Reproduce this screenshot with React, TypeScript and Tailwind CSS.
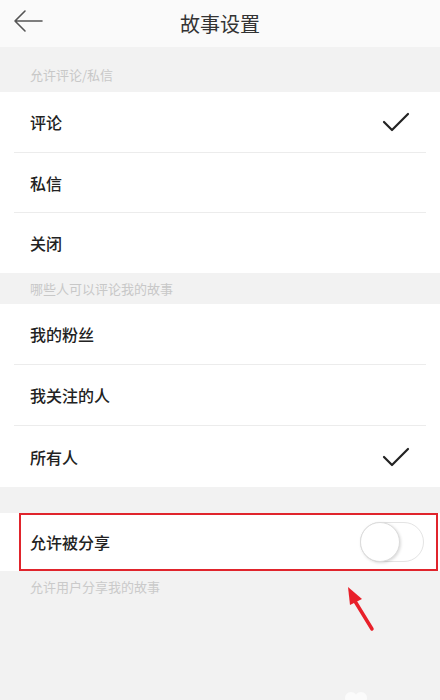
import React from "react";

const font = { fontFamily: '"Noto Sans CJK SC", "Noto Sans", sans-serif' };

function Check() {
  return (
    <svg width="28" height="22" viewBox="0 0 28 22" fill="none">
      <path d="M2 11 L10 19 L26 3" stroke="#222" strokeWidth="2.2" strokeLinecap="round" strokeLinejoin="round" />
    </svg>
  );
}

function Row({ label, checked, last, tall }: { label: string; checked?: boolean; last?: boolean; tall?: boolean }) {
  return (
    <div className="bg-white pl-[14px]">
      <div className={`${tall ? "h-[61px]" : "h-[60px]"} flex items-center justify-between pl-[16px] pr-[16px] mr-[14px] ${last ? "" : "border-b border-[#ececec]"}`}>
        <span className="text-[16px] text-[#222] font-medium">{label}</span>
        {checked && <Check />}
      </div>
    </div>
  );
}

export default function App() {
  return (
    <div className="w-[440px] h-[700px] bg-[#f2f2f2] relative overflow-hidden" style={font}>
      <div className="h-[47px] bg-[#fafafa] flex items-center relative">
        <div className="absolute left-[12px] top-[8px]">
          <svg width="32" height="26" viewBox="0 0 32 26" fill="none">
            <path d="M30 13 H3 M13 3 L3 13 L13 23" stroke="#555" strokeWidth="1.6" strokeLinecap="round" strokeLinejoin="round" />
          </svg>
        </div>
        <div className="flex-1 text-center text-[20px] text-[#333]">故事设置</div>
      </div>
      <div className="h-[45px] flex items-end pb-[8px] pl-[30px] text-[13px] text-[#c8c8c8]">允许评论/私信</div>
      <Row label="评论" checked tall />
      <Row label="私信" />
      <Row label="关闭" last />
      <div className="h-[31px] flex items-center pl-[30px] text-[13px] text-[#c8c8c8]">哪些人可以评论我的故事</div>
      <Row label="我的粉丝" tall />
      <Row label="我关注的人" tall />
      <Row label="所有人" checked last tall />
      <div className="h-[26px]" />
      <div className="bg-white h-[58px] flex">
        <div className="ml-[19px] mr-[2px] flex-1 border-2 border-[#e0242c] flex items-center justify-between pl-[9px] pr-[12px]">
          <span className="text-[16px] text-[#222] font-medium">允许被分享</span>
          <div className="w-[64px] h-[40px] rounded-full border border-[#e4e4e4] bg-white relative">
            <div className="absolute left-[-1px] top-[-1px] w-[40px] h-[40px] rounded-full bg-white border border-[#dcdcdc] shadow-[1px_1px_3px_rgba(0,0,0,0.15)]" />
          </div>
        </div>
      </div>
      <div className="pl-[30px] pt-[6px] text-[13px] text-[#cacaca]">允许用户分享我的故事</div>
      <svg className="absolute left-[340px] top-[582px]" width="40" height="52" viewBox="0 0 40 52" fill="none">
        <path d="M32 47 L13 16" stroke="#e8202a" strokeWidth="3.5" strokeLinecap="round" />
        <path d="M8 5 L22 17 L10 23 Z" fill="#e8202a" />
      </svg>
      <svg className="absolute left-[343px] top-[690px]" width="26" height="14" viewBox="0 0 26 14" fill="none">
        <circle cx="8" cy="8" r="6" fill="#fbfbfb" />
        <circle cx="18" cy="8" r="6" fill="#fbfbfb" />
      </svg>
    </div>
  );
}
